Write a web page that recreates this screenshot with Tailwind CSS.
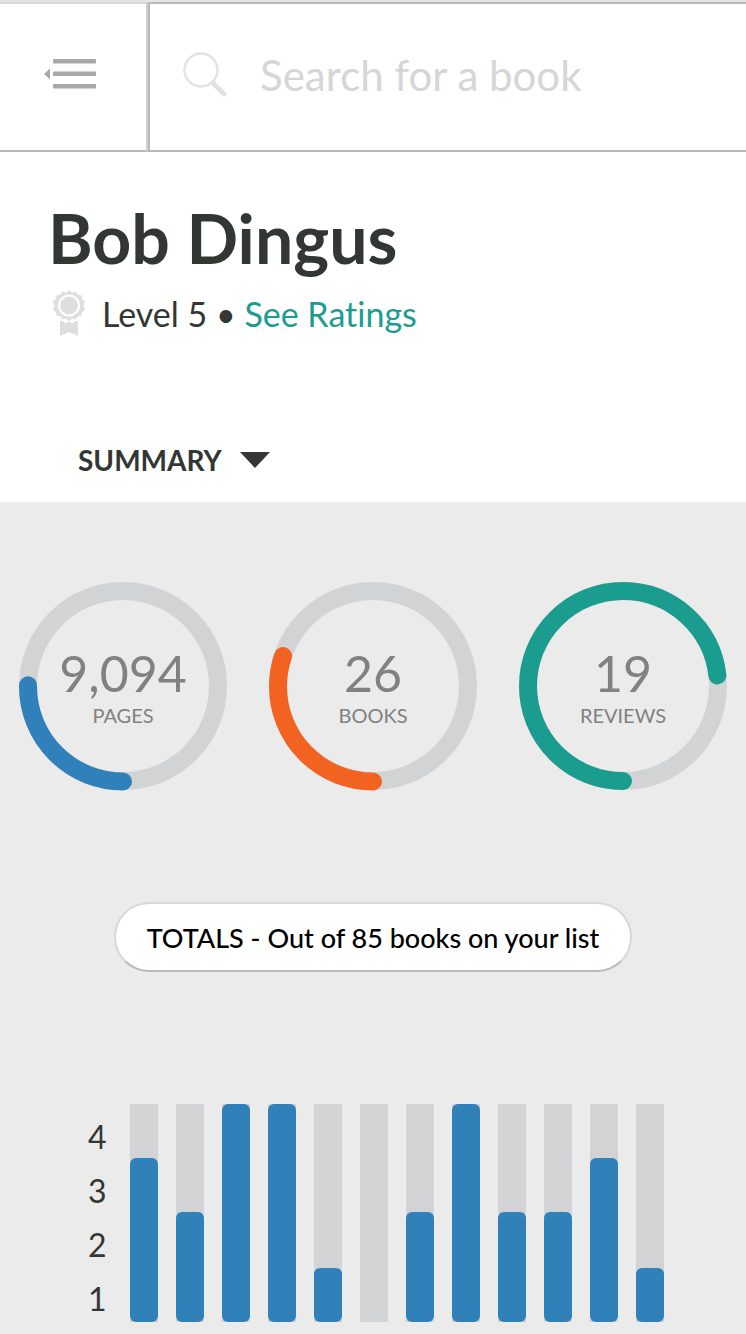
<!DOCTYPE html>
<html lang="en">
<head>
<meta charset="utf-8">
<meta name="viewport" content="width=device-width, initial-scale=1">
<title>Bob Dingus</title>
<script src="https://cdn.jsdelivr.net/npm/@tailwindcss/browser@4"></script>
</head>
<body class="min-h-screen bg-[#ebebeb] font-['Lato',sans-serif] text-[#323734]">
<header class="flex h-[152px] border-t-2 border-[#e4e4e4] bg-white">
  <button type="button" aria-label="Toggle menu" class="flex w-[148px] shrink-0 items-center justify-center border-2 border-l-0 border-t-[#d8d8d8] border-r-[#cfcfcf] border-b-[#b9b9b9] pr-1 pb-1.5">
    <svg class="h-8 w-[54px]" viewBox="0 0 54 32" fill="#a8a8a8" aria-hidden="true">
      <path d="M0 16 6 10.500V21.500Z"/>
      <rect x="9" y="1" width="43" height="4.500" rx="1"/>
      <rect x="9" y="13.500" width="43" height="4.500" rx="1"/>
      <rect x="9" y="26" width="43" height="4.500" rx="1"/>
    </svg>
  </button>
  <label class="flex min-w-0 flex-1 items-center gap-8 border-2 border-r-0 border-[#b9b9b9] pb-1 pl-8">
    <svg class="size-[46px] shrink-0" viewBox="0 0 46 46" fill="none" stroke="#e2e2e2" aria-hidden="true">
      <circle cx="19" cy="18" r="16.500" stroke-width="2.400"/>
      <path d="M31 31 42 42" stroke-width="5" stroke-linecap="round"/>
    </svg>
    <input type="search" aria-label="Search for a book" placeholder="Search for a book" class="min-w-0 flex-1 bg-transparent text-[42px] outline-none placeholder:text-[#d6d6d6]">
  </label>
</header>

<main>
  <section class="bg-white px-12 pt-[46px] pb-[22px]">
    <h1 class="text-[68px] leading-20 font-bold">Bob Dingus</h1>
    <div class="mt-[11px] ml-0.5 flex h-12 items-center text-[34px]">
      <svg class="mr-4 h-12 w-9 shrink-0" viewBox="0 0 36 48" aria-hidden="true">
        <path fill="#dedede" d="M10 32H13L15 34.500 19 32.500 23 34.500 25 32H28V47L19 43 10 47Z"/>
        <path fill="#dedede" stroke="#fff" stroke-width="1" d="M19 .5 22 3.500 26 2 28 5.500 32 6 32.500 10 35.500 12.500 34 16.500 35.500 20.500 32.500 23 32 27 28 27.500 26 31 22 30 19 33 16 30 12 31 10 27.500 6 27 5.500 23 2.500 20.500 4 16.500 2.500 12.500 5.500 10 6 6 10 5.500 12 2 16 3.500Z"/>
        <circle cx="19" cy="16.500" r="10" fill="none" stroke="#fff" stroke-width="2"/>
      </svg>
      <p class="whitespace-nowrap [font-variant-ligatures:none]">Level 5 • <a href="#ratings" class="text-[#1a9d8f]">See Ratings</a></p>
    </div>
    <button type="button" class="mt-[103px] ml-[30px] flex h-10 items-center gap-[18px] text-[28px] font-bold">
      SUMMARY
      <svg class="h-4 w-[30px]" viewBox="0 0 30 16" fill="#323734" aria-hidden="true"><path d="M0 0H30L15 16Z"/></svg>
    </button>
  </section>

  <section class="flex justify-between px-[19px] pt-20">
    <div class="grid size-[208px] place-items-center">
      <svg class="col-start-1 row-start-1 size-full overflow-visible" viewBox="0 0 208 208" fill="none" stroke-width="18" aria-hidden="true">
        <circle cx="104" cy="104" r="95" stroke="#d2d3d5"/>
        <circle cx="104.500" cy="104" r="95" stroke="#3081b9" stroke-linecap="round" pathLength="100" stroke-dasharray="25.200 100" transform="rotate(90 104 104)"/>
      </svg>
      <p class="col-start-1 row-start-1 flex flex-col items-center pt-1.5 text-[#818181]"><span class="text-[50px] leading-[52px]">9,094</span><span class="text-xl leading-8">PAGES</span></p>
    </div>
    <div class="grid size-[208px] place-items-center">
      <svg class="col-start-1 row-start-1 size-full overflow-visible" viewBox="0 0 208 208" fill="none" stroke-width="18" aria-hidden="true">
        <circle cx="104" cy="104" r="95" stroke="#d2d3d5"/>
        <circle cx="104.500" cy="104" r="95" stroke="#f26322" stroke-linecap="round" pathLength="100" stroke-dasharray="30.200 100" transform="rotate(90 104 104)"/>
      </svg>
      <p class="col-start-1 row-start-1 flex flex-col items-center pt-1.5 text-[#818181]"><span class="text-[50px] leading-[52px]">26</span><span class="text-xl leading-8">BOOKS</span></p>
    </div>
    <div class="grid size-[208px] place-items-center">
      <svg class="col-start-1 row-start-1 size-full overflow-visible" viewBox="0 0 208 208" fill="none" stroke-width="18" aria-hidden="true">
        <circle cx="104" cy="104" r="95" stroke="#d2d3d5"/>
        <circle cx="104" cy="104" r="95" stroke="#1a9d8f" stroke-linecap="round" pathLength="100" stroke-dasharray="73.200 100" transform="rotate(90 104 104)"/>
      </svg>
      <p class="col-start-1 row-start-1 flex flex-col items-center pt-1.5 text-[#818181]"><span class="text-[50px] leading-[52px]">19</span><span class="text-xl leading-8">REVIEWS</span></p>
    </div>
  </section>

  <div class="mt-28 flex justify-center">
    <button type="button" class="h-[70px] rounded-full border-2 border-[#d8d8d8] border-b-[#b9b9b9] bg-white px-[31px] pt-0.5 text-[27px] font-medium whitespace-nowrap text-black">TOTALS - Out of 85 books on your list</button>
  </div>

  <section aria-label="Books by month" class="mt-[132px] flex h-[230px] gap-6 pr-[82px] pb-3 pl-[88px]">
    <div class="flex w-[18px] flex-col pt-1.5 text-[32px] leading-[54px]">
      <span>4</span><span>3</span><span>2</span><span>1</span>
    </div>
    <div class="flex flex-1 gap-[18px]">
      <div class="flex flex-1 items-end bg-[#d2d3d5]"><div class="w-full rounded-md bg-[#3081b9]" style="height:75.200%"></div></div>
      <div class="flex flex-1 items-end bg-[#d2d3d5]"><div class="w-full rounded-md bg-[#3081b9]" style="height:50.400%"></div></div>
      <div class="flex flex-1 items-end bg-[#d2d3d5]"><div class="w-full rounded-md bg-[#3081b9]" style="height:100%"></div></div>
      <div class="flex flex-1 items-end bg-[#d2d3d5]"><div class="w-full rounded-md bg-[#3081b9]" style="height:100%"></div></div>
      <div class="flex flex-1 items-end bg-[#d2d3d5]"><div class="w-full rounded-md bg-[#3081b9]" style="height:25%"></div></div>
      <div class="flex flex-1 items-end bg-[#d2d3d5]"></div>
      <div class="flex flex-1 items-end bg-[#d2d3d5]"><div class="w-full rounded-md bg-[#3081b9]" style="height:50.400%"></div></div>
      <div class="flex flex-1 items-end bg-[#d2d3d5]"><div class="w-full rounded-md bg-[#3081b9]" style="height:100%"></div></div>
      <div class="flex flex-1 items-end bg-[#d2d3d5]"><div class="w-full rounded-md bg-[#3081b9]" style="height:50.400%"></div></div>
      <div class="flex flex-1 items-end bg-[#d2d3d5]"><div class="w-full rounded-md bg-[#3081b9]" style="height:50.400%"></div></div>
      <div class="flex flex-1 items-end bg-[#d2d3d5]"><div class="w-full rounded-md bg-[#3081b9]" style="height:75.200%"></div></div>
      <div class="flex flex-1 items-end bg-[#d2d3d5]"><div class="w-full rounded-md bg-[#3081b9]" style="height:25%"></div></div>
    </div>
  </section>
</main>
</body>
</html>
